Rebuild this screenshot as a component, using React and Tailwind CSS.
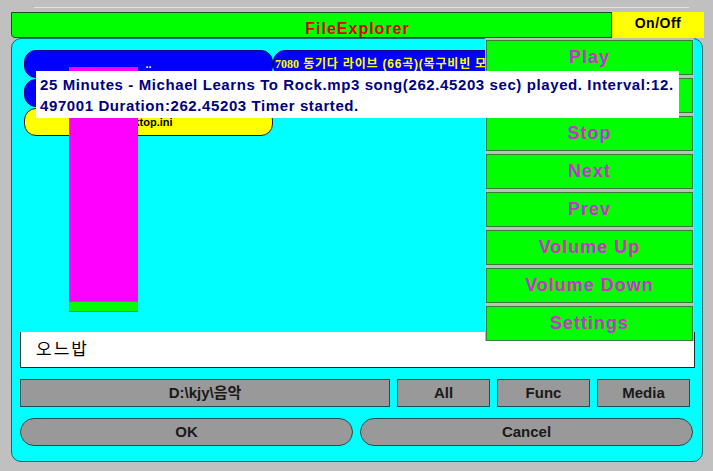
export default function App() {
  const buttons = ["Play", "Pause", "Stop", "Next", "Prev", "Volume Up", "Volume Down", "Settings"];
  return (
    <div className="relative h-[471px] w-[713px] overflow-hidden bg-[#c0c0c0] font-['Liberation_Sans','Noto_Sans_CJK_KR',sans-serif]">
      <div className="ml-[34px] mt-[7px] h-[1px] w-[655px] bg-[#e2e2e2]" />
      <div className="relative ml-[11px] mt-[4px] flex h-[26px] w-[693px] items-end justify-center rounded-bl-[4px] border border-[#1d4d1d] bg-[#00ff00]">
        <span className="text-[16px] font-bold leading-none tracking-[1px] text-[#dd0000]">FileExplorer</span>
        <div className="absolute right-[-1px] top-[-1px] flex h-[26px] w-[93px] items-start justify-center border-l border-[#1d4d1d] bg-[#ffff00] pt-[4px] text-[14px] font-bold leading-none tracking-[0.5px] text-black">
          On/Off
        </div>
      </div>
      <div className="ml-[11px] flex h-[424px] w-[692px] flex-col rounded-[10px] border border-[#007070] bg-[#00ffff] px-[8px] pt-[11px]">
        <div className="grid h-[282px] shrink-0 auto-rows-[28px] grid-cols-[249px_249px] content-start gap-y-[1px] pl-[4px]">
          <div className="flex items-center justify-center overflow-hidden whitespace-nowrap rounded-[12px] border border-[#000080] bg-[#0000ff] text-[11px] font-bold text-white">..</div>
          <div className="flex items-center overflow-hidden whitespace-nowrap rounded-[12px] border border-[#000080] bg-[#0000ff] pl-[1px] text-[12px] font-bold tracking-[0.8px] text-[#ffff00]">
            <span className="font-['Liberation_Serif',serif] text-[12px] tracking-normal">7080</span>&nbsp;동기다 라이브 (66곡)(목구비빈 모음)
          </div>
          <div className="flex items-center justify-center overflow-hidden whitespace-nowrap rounded-[12px] border border-[#000080] bg-[#0000ff] text-[11px] font-bold text-white">Music</div>
          <div className="flex items-center justify-center overflow-hidden whitespace-nowrap rounded-[12px] border border-[#000080] bg-[#0000ff] text-[11px] font-bold text-white">Video</div>
          <div className="flex items-center justify-center overflow-hidden whitespace-nowrap rounded-[12px] border border-[#202020] bg-[#ffff00] pr-[10px] text-[11px] font-bold text-black">desktop.ini</div>
        </div>
        <div className="flex h-[36px] w-[675px] shrink-0 items-center border-x border-b border-[#1a3030] bg-white pl-[15px] text-[17px] tracking-[2px] text-black">
          오느밥
        </div>
        <div className="mt-[11px] flex h-[28px] shrink-0 gap-[7px] text-[15px] font-bold text-[#1a1a1a]">
          <div className="flex w-[370px] items-center justify-center border border-[#1a5050] bg-[#999999]">D:\kjy\음악</div>
          <div className="flex w-[93px] items-center justify-center border border-[#1a5050] bg-[#999999]">All</div>
          <div className="flex w-[93px] items-center justify-center border border-[#1a5050] bg-[#999999]">Func</div>
          <div className="flex w-[93px] items-center justify-center border border-[#1a5050] bg-[#999999]">Media</div>
        </div>
        <div className="mt-[11px] flex h-[28px] shrink-0 gap-[7px] text-[15px] font-bold text-[#1a1a1a]">
          <div className="flex w-[333px] items-center justify-center rounded-full border border-[#1a5050] bg-[#999999]">OK</div>
          <div className="flex w-[333px] items-center justify-center rounded-full border border-[#1a5050] bg-[#999999]">Cancel</div>
        </div>
      </div>

      <div className="absolute left-[485px] top-[38px] flex h-[303px] w-[209px] flex-col gap-[3px] bg-[#b8c4b8] px-[1px] pt-[2px]">
        {buttons.map((b) => (
          <div
            key={b}
            className="flex h-[35px] shrink-0 items-center justify-center border border-[#3a7a3a] bg-[#00ff00] text-[18px] font-bold tracking-[1px] text-[#d02ed0]"
          >
            {b}
          </div>
        ))}
      </div>

      <div className="absolute left-[69px] top-[67px] flex h-[245px] w-[69px] flex-col border-l border-[#9060c0]">
        <div className="flex-1 bg-[#ff00ff]" />
        <div className="h-[11px] border-y border-[#7070a0] bg-[#00ff00]" />
      </div>

      <div className="absolute left-[36px] top-[71px] h-[47px] w-[643px] bg-white pl-[4px] pt-[3px] text-[15px] font-bold leading-[21px] tracking-[0.6px] text-[#000080]">
        25 Minutes - Michael Learns To Rock.mp3 song(262.45203 sec) played. Interval:12.
        <br />
        497001 Duration:262.45203 Timer started.
      </div>
    </div>
  );
}
